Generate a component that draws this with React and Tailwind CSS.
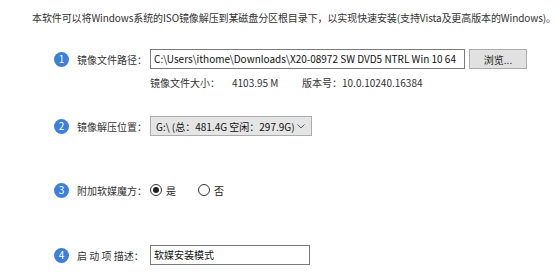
import { useState } from 'react';

const font = { fontFamily: '"Microsoft YaHei", "Noto Sans CJK SC", "Noto Sans", sans-serif' };

function Step({ n, label, children }) {
  return (
    <div className="flex items-center h-[20px]">
      <div className="w-[15px] h-[15px] shrink-0 rounded-full bg-[#3d7fd9] text-white text-[10px] leading-none flex items-center justify-center">
        {n}
      </div>
      <div className="w-[81px] shrink-0 pl-[8px] text-[10px] text-[#333] whitespace-nowrap">{label}</div>
      {children}
    </div>
  );
}

function Radio({ checked, label, onClick }) {
  return (
    <label className="flex items-center gap-[4px] cursor-pointer" onClick={onClick}>
      <span className="w-[12px] h-[12px] rounded-full border border-[#333] flex items-center justify-center bg-white">
        {checked && <span className="w-[6px] h-[6px] rounded-full bg-[#222]" />}
      </span>
      <span className="text-[10px] text-[#222]">{label}</span>
    </label>
  );
}

export default function App() {
  const [magic, setMagic] = useState(true);

  return (
    <div className="w-[558px] h-[276px] bg-white overflow-hidden" style={font}>
      <div className="pt-[9px] pl-[32px] h-[27px] text-[10px] leading-[18px] tracking-[-0.1px] text-[#333] whitespace-nowrap">
        本软件可以将Windows系统的ISO镜像解压到某磁盘分区根目录下，以实现快速安装(支持Vista及更高版本的Windows)。
      </div>

      <div className="pl-[54px]">
        <div className="mt-[22px]">
          <Step n="1" label="镜像文件路径：">
            <div className="w-[315px] h-[20px] shrink-0 border border-[#7a7a7a] bg-white px-[3px] text-[10px] leading-[18px] text-[#111] whitespace-nowrap overflow-hidden">
              C:\Users\ithome\Downloads\X20-08972 SW DVD5 NTRL Win 10 64
            </div>
            <button className="ml-[4px] w-[58px] h-[20px] shrink-0 border border-[#adadad] bg-[#e1e1e1] text-[10px] text-[#222]">
              浏览...
            </button>
          </Step>
        </div>

        <div className="mt-[5px] pl-[96px] flex items-center h-[16px] text-[10px] text-[#333] whitespace-nowrap">
          <span className="w-[82px] shrink-0">镜像文件大小：</span>
          <span className="w-[70px] shrink-0">4103.95 M</span>
          <span>版本号：10.0.10240.16384</span>
        </div>

        <div className="mt-[26px]">
          <Step n="2" label="镜像解压位置：">
            <div className="w-[162px] h-[20px] shrink-0 border border-[#acacac] bg-[#e5e5e5] pl-[5px] pr-[6px] flex items-center justify-between text-[10px] text-[#111] whitespace-nowrap">
              <span>G:\ (总：481.4G 空闲：297.9G)</span>
              <svg width="8" height="5" viewBox="0 0 8 5" className="text-[#555]">
                <path d="M0.5 0.5 L4 4 L7.5 0.5" fill="none" stroke="currentColor" strokeWidth="1" />
              </svg>
            </div>
          </Step>
        </div>

        <div className="mt-[44px]">
          <Step n="3" label="附加软媒魔方：">
            <div className="flex items-center gap-[22px]">
              <Radio checked={magic} label="是" onClick={() => setMagic(true)} />
              <Radio checked={!magic} label="否" onClick={() => setMagic(false)} />
            </div>
          </Step>
        </div>

        <div className="mt-[45px]">
          <Step n="4" label="启 动 项 描述：">
            <div className="w-[160px] h-[20px] shrink-0 border border-[#7a7a7a] bg-white px-[3px] text-[10px] leading-[18px] text-[#111] whitespace-nowrap">
              软媒安装模式
            </div>
          </Step>
        </div>
      </div>
    </div>
  );
}
